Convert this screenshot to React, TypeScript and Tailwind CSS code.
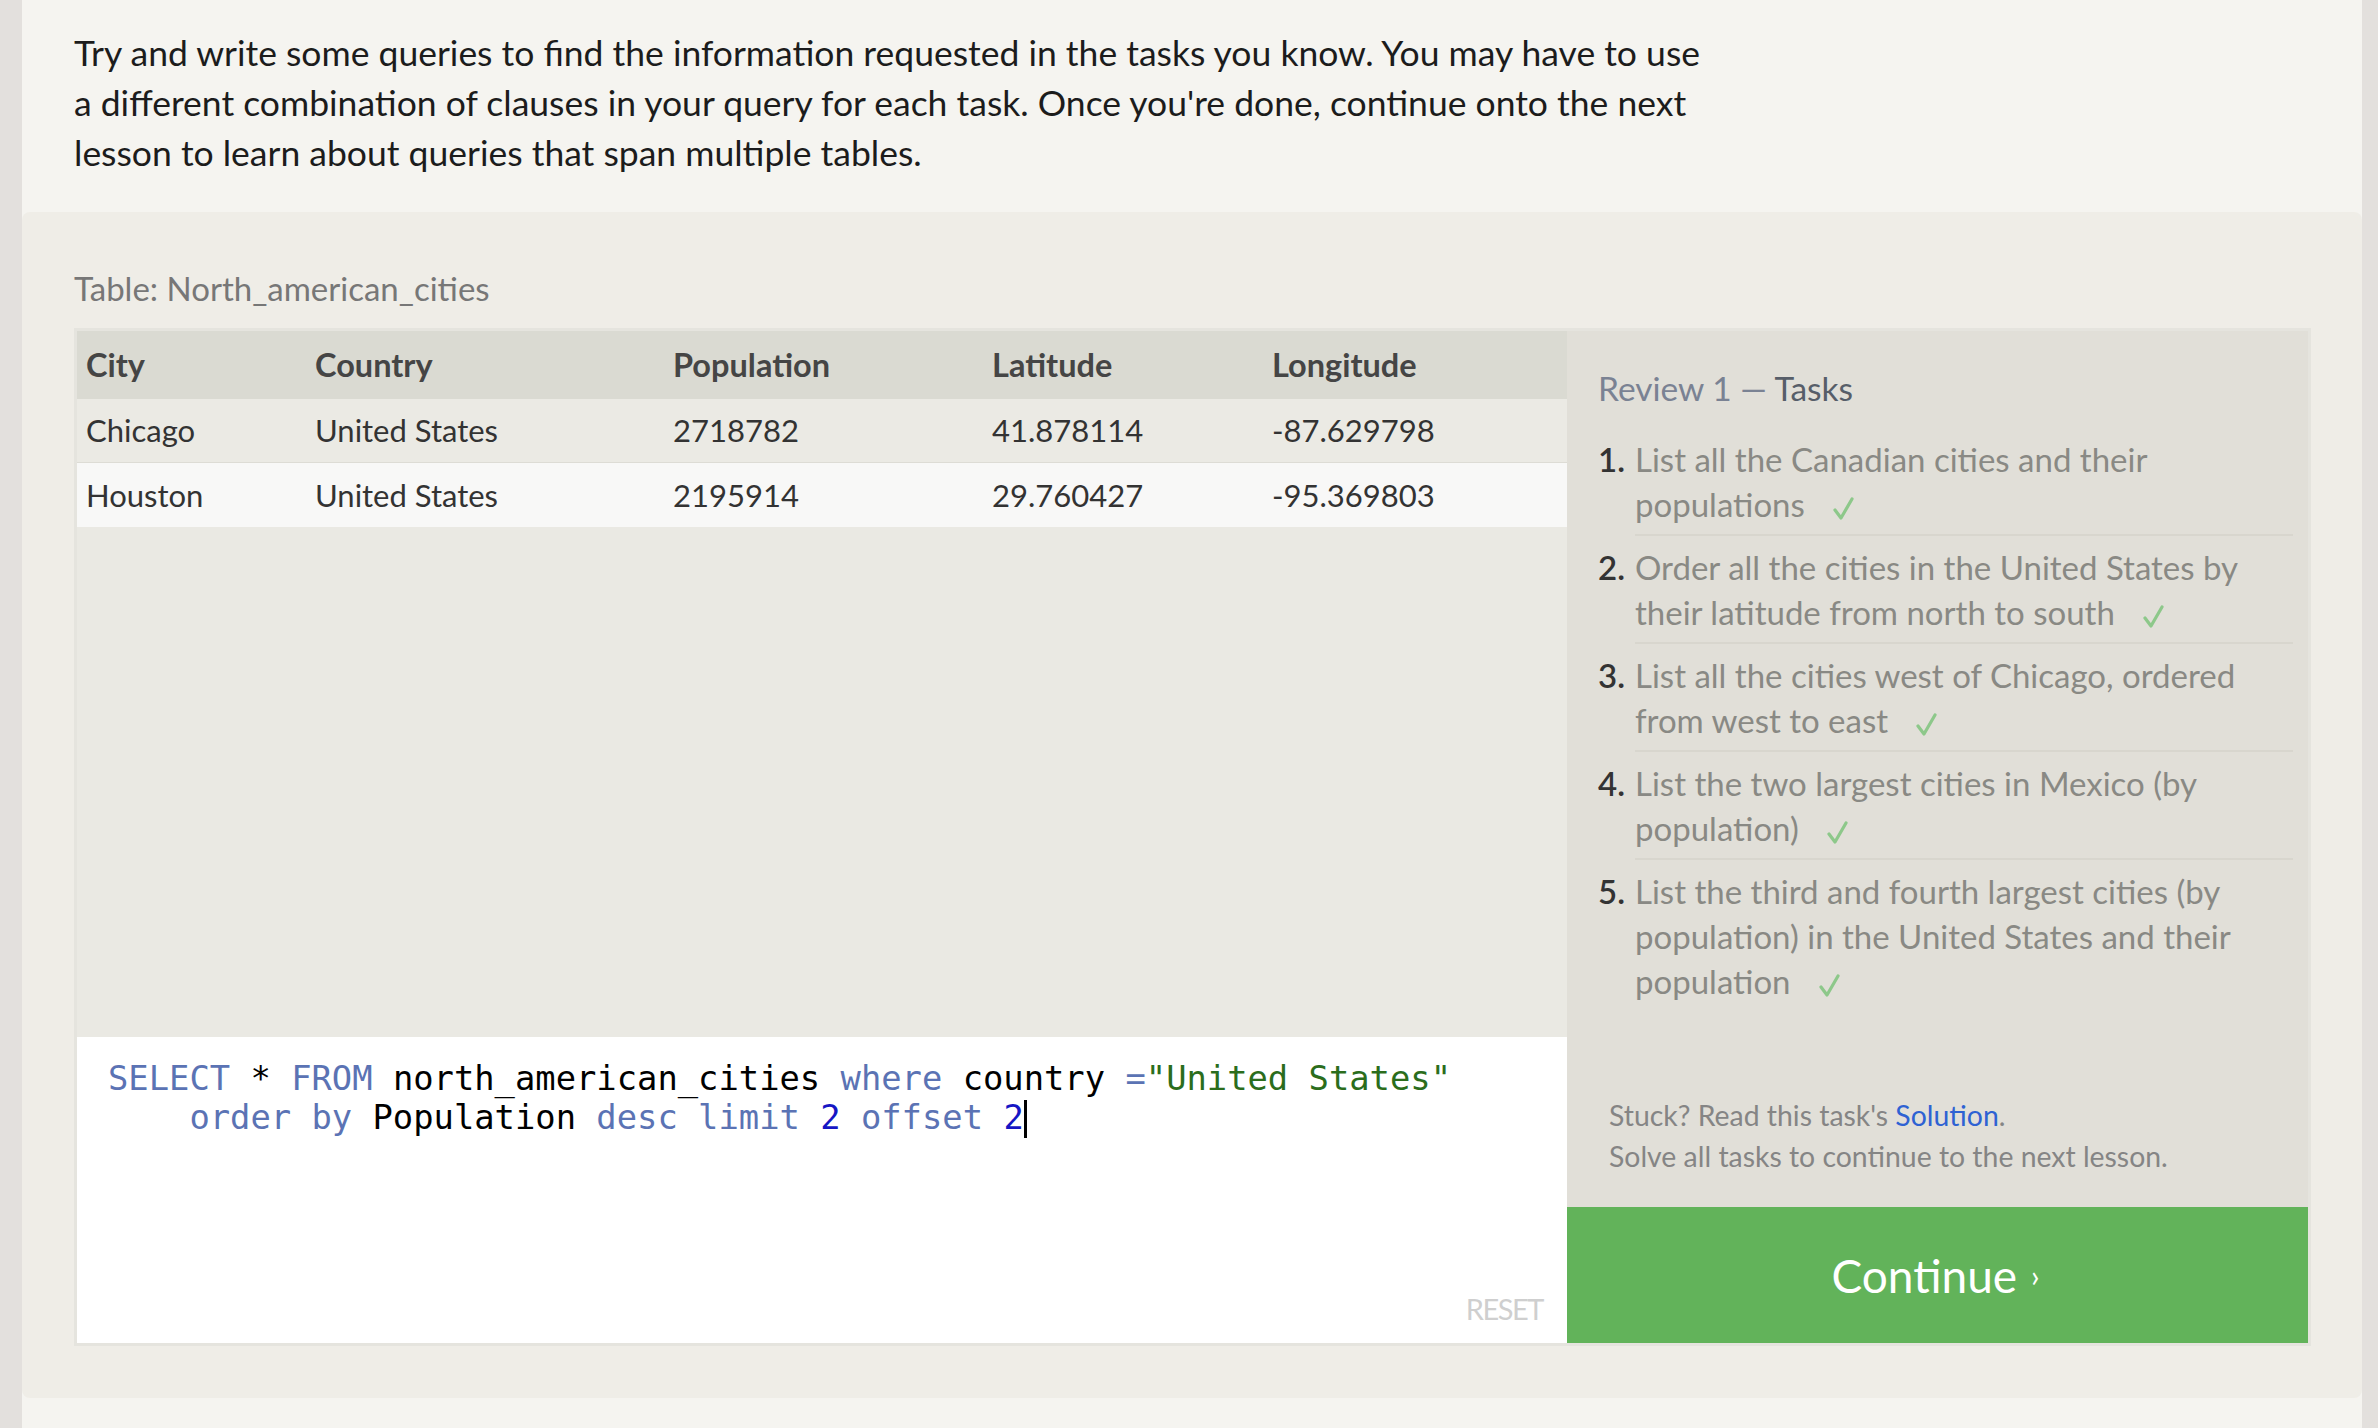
import React from 'react';

const ui = "font-['Lato','Noto_Sans',sans-serif]";
const mono = "font-['DejaVu_Sans_Mono','Liberation_Mono',monospace]";

const COLUMNS = ['City', 'Country', 'Population', 'Latitude', 'Longitude'];

const ROWS = [
  ['Chicago', 'United States', '2718782', '41.878114', '-87.629798'],
  ['Houston', 'United States', '2195914', '29.760427', '-95.369803'],
];

const TASKS = [
  'List all the Canadian cities and their populations',
  'Order all the cities in the United States by their latitude from north to south',
  'List all the cities west of Chicago, ordered from west to east',
  'List the two largest cities in Mexico (by population)',
  'List the third and fourth largest cities (by population) in the United States and their population',
];

const gridCols = 'grid grid-cols-[229px_358px_319px_280px_1fr] pl-[9px]';

function Kw({ children }: { children: React.ReactNode }) {
  return <span className="text-[#5b73b4]">{children}</span>;
}

function Check() {
  return (
    <svg className="inline-block ml-[28px] align-[-3px]" width="21" height="23" viewBox="0 0 21 23">
      <path d="M2 13 L8 21 L19 2" fill="none" stroke="#8dc88a" strokeWidth="3.2" strokeLinecap="round" strokeLinejoin="round" />
    </svg>
  );
}

function Editor() {
  return (
    <div className="relative h-[306px] bg-white">
      <pre className={`${mono} m-0 pl-[31px] pt-[22px] text-[33.8px] leading-[39px] text-black whitespace-pre`}>
        <Kw>SELECT</Kw> * <Kw>FROM</Kw> north_american_cities <Kw>where</Kw> country <Kw>=</Kw>
        <span className="text-[#2b6d1c]">"United States"</span>
        {'\n    '}
        <Kw>order by</Kw> Population <Kw>desc</Kw> <Kw>limit</Kw> <span className="text-[#1616c4]">2</span>{' '}
        <Kw>offset</Kw> <span className="text-[#1616c4]">2</span>
        <span className="inline-block w-[3px] h-[38px] bg-black align-[-9px]" />
      </pre>
      <span className={`${ui} absolute right-[24px] bottom-[20px] text-[29px] leading-none text-[#cfcfcf] tracking-tighter`}>
        RESET
      </span>
    </div>
  );
}

function ResultTable() {
  return (
    <div className="flex-1 flex flex-col min-w-0">
      <div className="flex-1 bg-[#eae9e3]">
        <div className={`${gridCols} h-[68px] items-center bg-[#dadad2] text-[#454545] font-bold text-[32.5px]`}>
          {COLUMNS.map((c) => (
            <div key={c}>{c}</div>
          ))}
        </div>
        {ROWS.map((r, i) => (
          <div
            key={r[0]}
            className={`${gridCols} h-[64px] items-center text-[31px] text-[#333] ${
              i === 0 ? 'bg-[#ebeae4] border-b border-[#dddcd5]' : 'bg-[#f8f8f7]'
            }`}
          >
            {r.map((v, j) => (
              <div key={j}>{v}</div>
            ))}
          </div>
        ))}
      </div>
      <Editor />
    </div>
  );
}

function TaskPanel() {
  return (
    <div className="w-[741px] flex flex-col bg-[#e1dfd8]">
      <div className="flex-1 flex flex-col pl-[31px] pr-[15px] pt-[37px]">
        <h3 className="text-[33.5px] leading-[40px] mb-[20px]">
          <span className="text-[#7a8293]">Review 1 — </span>
          <span className="text-[#575e69]">Tasks</span>
        </h3>
        <ol>
          {TASKS.map((t, i) => (
            <li key={i} className="flex text-[33px] leading-[45px]">
              <span className="w-[37px] shrink-0 pt-[9px] text-[#333] font-semibold">{i + 1}.</span>
              <div
                className={`flex-1 pt-[9px] pb-[7px] pr-[18px] text-[#898984] ${
                  i < TASKS.length - 1 ? 'border-b-2 border-[#d8d6ce]' : ''
                }`}
              >
                {t}
                <Check />
              </div>
            </li>
          ))}
        </ol>
        <div className="mt-auto pl-[11px] pb-[30px] text-[28.4px] leading-[41px] text-[#858585]">
          <p>
            Stuck? Read this task's <a className="text-[#2e62d3]">Solution</a>.
          </p>
          <p>Solve all tasks to continue to the next lesson.</p>
        </div>
      </div>
      <button className="h-[136px] bg-[#62b35a] text-white text-[46px] flex items-center justify-center gap-[14px] pr-[4px]">
        Continue <span className="text-[30px]">›</span>
      </button>
    </div>
  );
}

export default function App() {
  return (
    <div className={`${ui} min-h-screen flex bg-[#e3e0dd] pl-[22px] pr-[16px]`}>
      <main className="flex-1 bg-[#f5f4f0] pb-[30px]">
        <section className="h-[212px] px-[52px] pt-[28px]">
          <p className="text-[35.5px] leading-[50px] text-[#1c1c1c]">
            Try and write some queries to find the information requested in the tasks you know. You may have to use
            <br />a different combination of clauses in your query for each task. Once you're done, continue onto the next
            <br />
            lesson to learn about queries that span multiple tables.
          </p>
        </section>
        <section className="bg-[#efede7] rounded-[8px] pl-[52px] pr-[51px] pt-[57px] pb-[52px]">
          <p className="text-[33px] leading-[38px] text-[#777] mb-[21px]">Table: North_american_cities</p>
          <div className="flex h-[1018px] border-[3px] border-[#e5e4de]">
            <ResultTable />
            <TaskPanel />
          </div>
        </section>
      </main>
    </div>
  );
}
